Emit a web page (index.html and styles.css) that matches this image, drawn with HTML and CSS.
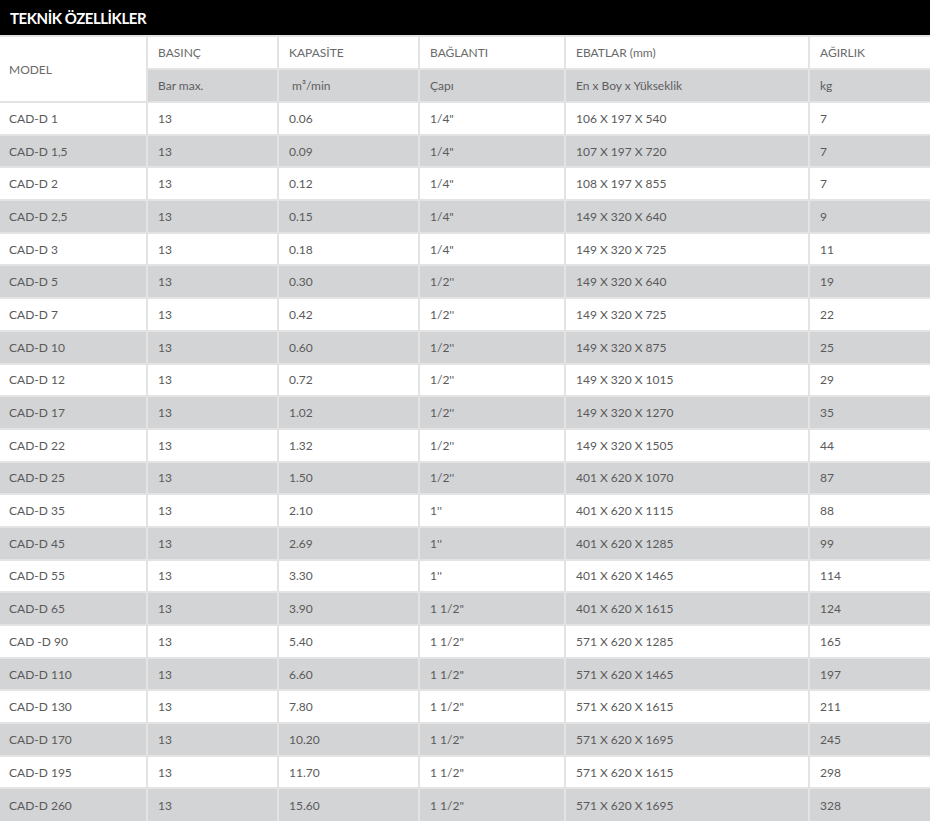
FILE: index.html
```html
<!DOCTYPE html>
<html lang="tr">
<head>
<meta charset="utf-8">
<title>Teknik Özellikler</title>
<link rel="stylesheet" href="styles.css">
</head>
<body>
<div class="title-bar">TEKNİK ÖZELLİKLER</div>
<table class="spec">
  <colgroup>
    <col class="c1"><col class="c2"><col class="c3"><col class="c4"><col class="c5"><col class="c6">
  </colgroup>
  <thead>
    <tr class="h1">
      <th rowspan="2" class="model">MODEL</th>
      <th>BASINÇ</th>
      <th>KAPASİTE</th>
      <th>BAĞLANTI</th>
      <th>EBATLAR (mm)</th>
      <th>AĞIRLIK</th>
    </tr>
    <tr class="h2">
      <th>Bar max.</th>
      <th>&nbsp;m³/min</th>
      <th>Çapı</th>
      <th>En x Boy x Yükseklik</th>
      <th>kg</th>
    </tr>
  </thead>
  <tbody>
    <tr><td>CAD-D 1</td><td>13</td><td>0.06</td><td>1/4"</td><td>106 X 197 X 540</td><td>7</td></tr>
    <tr><td>CAD-D 1,5</td><td>13</td><td>0.09</td><td>1/4"</td><td>107 X 197 X 720</td><td>7</td></tr>
    <tr><td>CAD-D 2</td><td>13</td><td>0.12</td><td>1/4"</td><td>108 X 197 X 855</td><td>7</td></tr>
    <tr><td>CAD-D 2,5</td><td>13</td><td>0.15</td><td>1/4"</td><td>149 X 320 X 640</td><td>9</td></tr>
    <tr><td>CAD-D 3</td><td>13</td><td>0.18</td><td>1/4"</td><td>149 X 320 X 725</td><td>11</td></tr>
    <tr><td>CAD-D 5</td><td>13</td><td>0.30</td><td>1/2''</td><td>149 X 320 X 640</td><td>19</td></tr>
    <tr><td>CAD-D 7</td><td>13</td><td>0.42</td><td>1/2''</td><td>149 X 320 X 725</td><td>22</td></tr>
    <tr><td>CAD-D 10</td><td>13</td><td>0.60</td><td>1/2''</td><td>149 X 320 X 875</td><td>25</td></tr>
    <tr><td>CAD-D 12</td><td>13</td><td>0.72</td><td>1/2''</td><td>149 X 320 X 1015</td><td>29</td></tr>
    <tr><td>CAD-D 17</td><td>13</td><td>1.02</td><td>1/2''</td><td>149 X 320 X 1270</td><td>35</td></tr>
    <tr><td>CAD-D 22</td><td>13</td><td>1.32</td><td>1/2''</td><td>149 X 320 X 1505</td><td>44</td></tr>
    <tr><td>CAD-D 25</td><td>13</td><td>1.50</td><td>1/2''</td><td>401 X 620 X 1070</td><td>87</td></tr>
    <tr><td>CAD-D 35</td><td>13</td><td>2.10</td><td>1''</td><td>401 X 620 X 1115</td><td>88</td></tr>
    <tr><td>CAD-D 45</td><td>13</td><td>2.69</td><td>1''</td><td>401 X 620 X 1285</td><td>99</td></tr>
    <tr><td>CAD-D 55</td><td>13</td><td>3.30</td><td>1''</td><td>401 X 620 X 1465</td><td>114</td></tr>
    <tr><td>CAD-D 65</td><td>13</td><td>3.90</td><td>1 1/2"</td><td>401 X 620 X 1615</td><td>124</td></tr>
    <tr><td>CAD -D 90</td><td>13</td><td>5.40</td><td>1 1/2"</td><td>571 X 620 X 1285</td><td>165</td></tr>
    <tr><td>CAD-D 110</td><td>13</td><td>6.60</td><td>1 1/2"</td><td>571 X 620 X 1465</td><td>197</td></tr>
    <tr><td>CAD-D 130</td><td>13</td><td>7.80</td><td>1 1/2"</td><td>571 X 620 X 1615</td><td>211</td></tr>
    <tr><td>CAD-D 170</td><td>13</td><td>10.20</td><td>1 1/2"</td><td>571 X 620 X 1695</td><td>245</td></tr>
    <tr><td>CAD-D 195</td><td>13</td><td>11.70</td><td>1 1/2"</td><td>571 X 620 X 1615</td><td>298</td></tr>
    <tr><td>CAD-D 260</td><td>13</td><td>15.60</td><td>1 1/2"</td><td>571 X 620 X 1695</td><td>328</td></tr>
  </tbody>
</table>
</body>
</html>
```
FILE: styles.css
```css
html, body {
  margin: 0;
  padding: 0;
  background: #ffffff;
}
body {
  font-family: Lato, "Open Sans", "Liberation Sans", sans-serif;
  width: 930px;
}
.title-bar {
  background: #000000;
  color: #ffffff;
  font-weight: 700;
  font-size: 15px;
  height: 35px;
  line-height: 36px;
  padding-left: 10px;
  box-sizing: border-box;
  letter-spacing: -0.45px;
}
.spec {
  width: 930px;
  table-layout: fixed;
  border-collapse: collapse;
  font-size: 12px;
  color: #5a5a5a;
}
.spec col.c1 { width: 147px; }
.spec col.c2 { width: 131px; }
.spec col.c3 { width: 141px; }
.spec col.c4 { width: 146px; }
.spec col.c5 { width: 244px; }
.spec col.c6 { width: 121px; }
.spec th,
.spec td {
  border: 2px solid #e3e3e3;
  padding: 0 0 0 10px;
  text-align: left;
  font-weight: 400;
  white-space: nowrap;
  vertical-align: middle;
}
.spec tr > :first-child { border-left: 0; }
.spec tr > :last-child { border-right: 0; }
.spec tbody tr:last-child td { border-bottom: 0; }
.spec thead tr { height: 33px; }
.spec thead th { color: #6a6a6a; }
.spec thead th.model { padding-left: 9px; }
.spec thead tr.h2 th { background: #d3d4d6; color: #5e5e5e; }
.spec tbody tr { height: 32.7px; }
.spec tbody tr:nth-child(even) td { background: #d3d4d6; }
.spec tbody td:first-child { padding-left: 9px; }
```
